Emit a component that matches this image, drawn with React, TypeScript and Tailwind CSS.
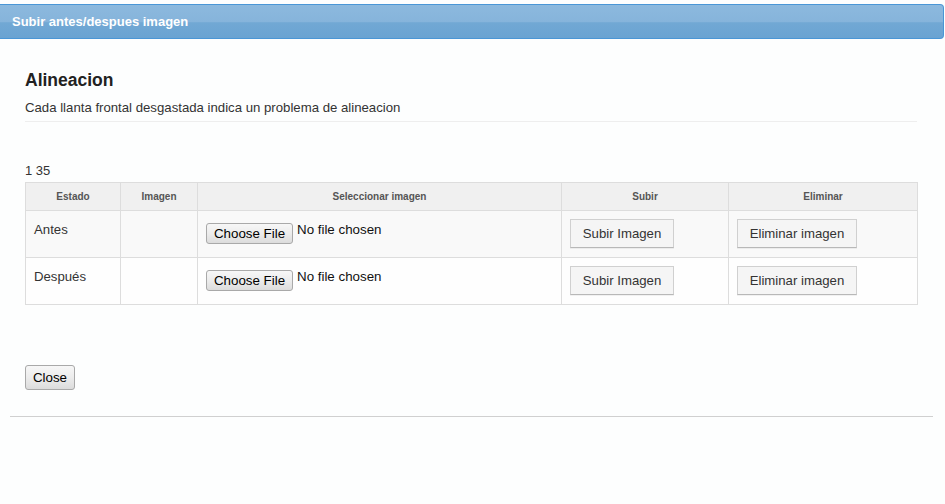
import React from "react";

function NativeBtn({ children, className = "" }: { children: React.ReactNode; className?: string }) {
  return (
    <span
      className={
        "inline-flex items-center justify-center rounded-[3px] border border-[#a9a9a9] bg-[linear-gradient(to_bottom,#f7f7f7_0%,#ececec_50%,#dcdcdc_100%)] text-[13.33px] leading-none text-black " +
        className
      }
    >
      {children}
    </span>
  );
}

function FileInput() {
  return (
    <div className="flex items-start">
      <NativeBtn className="mt-[4px] h-[21px] w-[87px] pt-[1px]">Choose File</NativeBtn>
      <span className="ml-[4px] mt-[2px] text-[13.33px] leading-[18px] text-[#111]">No file chosen</span>
    </div>
  );
}

function FlatBtn({ children, w }: { children: React.ReactNode; w: string }) {
  return (
    <span
      className={
        "inline-flex h-[29px] items-center justify-center border border-[#d0d0d0] border-b-[#b8b8b8] bg-[#f5f5f5] text-[13.2px] text-[#333] shadow-[0_1px_0_rgba(0,0,0,0.05)] " +
        w
      }
    >
      {children}
    </span>
  );
}

export default function App() {
  const rows = [
    { estado: "Antes", bg: "bg-[#f9f9f9]" },
    { estado: "Después", bg: "bg-[#fefefe]" },
  ];
  return (
    <div className="h-[504px] w-[945px] overflow-hidden bg-[#fdfefe] pt-[4px] font-['Liberation_Sans',Arial,sans-serif]">
      <div className="flex h-[35px] w-[944px] items-center rounded-r-[4px] border border-l-0 border-[#4a96d6] bg-[linear-gradient(to_bottom,#8cb9de_0%,#86b4db_50%,#71a8d4_54%,#6aa3d2_100%)] pl-[12px]">
        <span className="text-[13px] font-bold text-white">Subir antes/despues imagen</span>
      </div>

      <div className="pl-[25px] pr-[28px]">
        <h2 className="mt-[31px] text-[17.5px] font-bold leading-[20px] text-[#222]">Alineacion</h2>
        <p className="mt-[9px] text-[13.2px] leading-[18px] text-[#333]">
          Cada llanta frontal desgastada indica un problema de alineacion
        </p>
        <div className="mt-[4px] h-px bg-[#eeeeee]" />
        <div className="mt-[40px] text-[13px] leading-[18px] text-[#333]">1 35</div>

        <table className="mt-[2px] w-[892px] table-fixed border-collapse text-[13.2px] text-[#333]">
          <colgroup>
            <col className="w-[95px]" />
            <col className="w-[77px]" />
            <col className="w-[364px]" />
            <col className="w-[167px]" />
            <col className="w-[189px]" />
          </colgroup>
          <thead>
            <tr className="h-[28px] bg-[#f0f0f0]">
              {["Estado", "Imagen", "Seleccionar imagen", "Subir", "Eliminar"].map((h) => (
                <th key={h} className="border border-[#dddddd] p-0 text-center align-middle text-[10px] font-bold text-[#555]">
                  {h}
                </th>
              ))}
            </tr>
          </thead>
          <tbody>
            {rows.map((r) => (
              <tr key={r.estado} className={"h-[47px] " + r.bg}>
                <td className="border border-[#dddddd] px-[8px] pt-[10px] align-top leading-[18px]">{r.estado}</td>
                <td className="border border-[#dddddd] px-[8px] pt-[8px] align-top" />
                <td className="border border-[#dddddd] px-[8px] pt-[8px] align-top">
                  <FileInput />
                </td>
                <td className="border border-[#dddddd] px-[8px] pt-[8px] align-top">
                  <div className="flex">
                    <FlatBtn w="w-[104px]">Subir Imagen</FlatBtn>
                  </div>
                </td>
                <td className="border border-[#dddddd] px-[8px] pt-[8px] align-top">
                  <div className="flex">
                    <FlatBtn w="w-[120px]">Eliminar imagen</FlatBtn>
                  </div>
                </td>
              </tr>
            ))}
          </tbody>
        </table>

        <div className="mt-[60px] flex">
          <NativeBtn className="h-[25px] w-[50px] border-[#9a9a9a] text-[#111]">Close</NativeBtn>
        </div>
      </div>

      <div className="ml-[10px] mt-[26px] h-px w-[923px] bg-[#d0d0d0]" />
    </div>
  );
}
